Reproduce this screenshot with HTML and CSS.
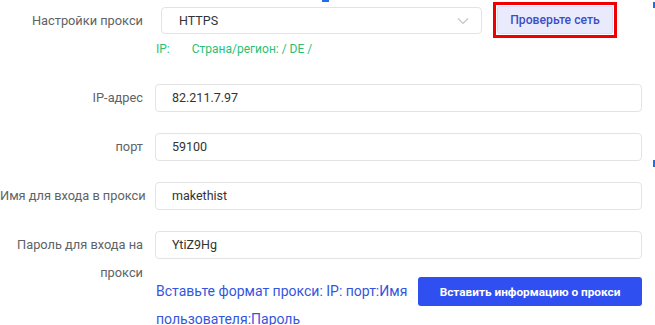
FILE: index.html
```html
<!DOCTYPE html>
<html lang="ru">
<head>
  <meta charset="UTF-8">
  <title>Настройки прокси</title>
  <link rel="stylesheet" href="styles.css">
</head>
<body>

  <div id="proxy-form">
    <div class="form-row row-type">
      <label class="row-label">Настройки прокси</label>
      <div class="select-box">
        <span>HTTPS</span>
        <svg class="chevron" width="12" height="8" viewBox="0 0 12 8">
          <path d="M1 1.5 L6 6.5 L11 1.5" fill="none" stroke="#c4c4c4" stroke-width="1.2"/>
        </svg>
      </div>
      <div class="check-wrap">
        <button class="check-btn">Проверьте сеть</button>
      </div>
    </div>

    <div class="ip-info">
      <span class="ip-key">IP:</span>
      <span>Страна/регион: / DE /</span>
    </div>

    <div class="form-row row-first">
      <label class="row-label">IP-адрес</label>
      <div class="text-input">82.211.7.97</div>
    </div>

    <div class="form-row">
      <label class="row-label">порт</label>
      <div class="text-input">59100</div>
    </div>

    <div class="form-row">
      <label class="row-label">Имя для входа в прокси</label>
      <div class="text-input">makethist</div>
    </div>

    <div class="form-row">
      <label class="row-label label-wrap">Пароль для входа на прокси</label>
      <div class="text-input">YtiZ9Hg</div>
    </div>

    <div class="form-row paste-row">
      <div class="row-label"></div>
      <p class="paste-hint">Вставьте формат прокси: IP: порт:Имя пользователя:Пароль</p>
      <button class="paste-btn">Вставить информацию о прокси</button>
    </div>
  </div>

  <span class="mark mark-top"></span>
  <span class="mark mark-right"></span>
  <span class="mark mark-mid"></span>

</body>
</html>
```

FILE: styles.css
```css
* {
  margin: 0;
  padding: 0;
  box-sizing: border-box;
}

body {
  font-family: Roboto, 'Noto Sans', sans-serif;
  background-color: #ffffff;
  color: #333;
  width: 655px;
  height: 325px;
  overflow: hidden;
  position: relative;
}

#proxy-form {
  padding: 7px 13px 0 0;
}

.form-row {
  display: flex;
  align-items: flex-start;
  height: 28px;
  margin-bottom: 21px;
}

.row-label {
  width: 143px;
  flex-shrink: 0;
  height: 28px;
  line-height: 28px;
  text-align: right;
  white-space: nowrap;
  font-size: 12.8px;
  color: #606266;
}

.label-wrap {
  white-space: normal;
}

.text-input {
  flex: 1;
  margin-left: 12px;
  height: 28px;
  line-height: 26px;
  padding-left: 16px;
  border: 1px solid #e3e3e3;
  border-radius: 4px;
  font-size: 12.5px;
  color: #333;
}

/* первая строка: тип прокси + кнопка проверки */
.row-type {
  height: 27px;
  margin-bottom: 0;
}

.row-type .row-label {
  height: 27px;
  line-height: 27px;
}

.select-box {
  margin-left: 18px;
  width: 321px;
  height: 27px;
  border: 1px solid #e3e3e3;
  border-radius: 4px;
  display: flex;
  align-items: center;
  justify-content: space-between;
  padding: 0 12px 0 17px;
  font-size: 12.5px;
  color: #333;
}

.chevron {
  display: block;
}

.check-wrap {
  margin-left: 11px;
  margin-top: -5px;
  border: 3px solid #f00000;
  padding: 1px;
}

.check-btn {
  display: block;
  width: 116px;
  height: 28px;
  border: 1px solid #d8dcf6;
  border-radius: 2px;
  background-color: #e9ebfc;
  color: #3b4fc4;
  font-family: inherit;
  font-size: 12.2px;
  font-weight: 500;
}

.ip-info {
  margin: 2px 0 0 156px;
  height: 26px;
  line-height: 26px;
  font-size: 12px;
  color: #2bbf73;
}

.ip-key {
  margin-right: 19px;
}

.row-first {
  margin-top: 22px;
}

.paste-row {
  height: auto;
  margin-top: -3px;
  margin-bottom: 0;
}

.paste-hint {
  margin-left: 13px;
  width: 262px;
  line-height: 28px;
  font-size: 14px;
  color: #3556dc;
}

.paste-btn {
  margin-left: auto;
  width: 224px;
  height: 29px;
  border: none;
  border-radius: 3px;
  background-color: #2f4ff0;
  color: #fff;
  font-family: inherit;
  font-size: 11.8px;
  font-weight: 700;
}

.mark {
  position: absolute;
  background-color: #1a6ff0;
}

.mark-top {
  left: 322px;
  top: 0;
  width: 7px;
  height: 2px;
}

.mark-right {
  left: 653px;
  top: 2px;
  width: 2px;
  height: 6px;
}

.mark-mid {
  left: 653px;
  top: 160px;
  width: 2px;
  height: 7px;
}
```
